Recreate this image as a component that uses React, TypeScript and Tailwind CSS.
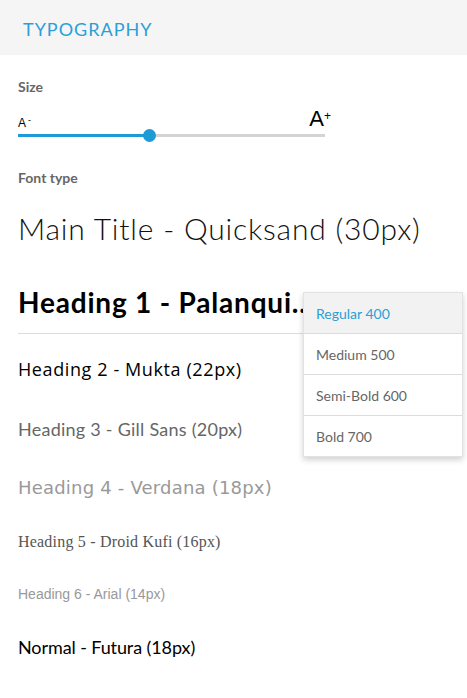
export default function App() {
  return (
    <div className="relative h-[698px] w-[467px] overflow-hidden bg-white font-['Lato',sans-serif]">
      <div className="flex h-[55px] items-center bg-[#f5f5f5] pl-[23px] pt-[2px]">
        <span className="text-[18px] leading-none tracking-[1px] text-[#2a9fd8]">TYPOGRAPHY</span>
      </div>
      <div className="px-[18px]">
        <div className="mt-[22px] text-[14px] font-bold leading-[20px] text-[#666]">Size</div>
        <div className="w-[307px] pt-[9px]">
          <div className="flex h-[24px] items-end justify-between font-['Liberation_Sans',sans-serif] text-black">
            <span className="pb-[1px] text-[12px] leading-none">
              A<sup className="ml-[2px] text-[9px]">-</sup>
            </span>
            <span className="mr-[-6px] text-[22px] leading-none">
              A<sup className="text-[12px]">+</sup>
            </span>
          </div>
          <div className="relative mt-[4px] h-[3px] bg-[#d4d4d4]">
            <div className="h-[3px] w-[131px] bg-[#1e9bd7]" />
            <div className="absolute left-[125px] top-[-5px] h-[13px] w-[13px] rounded-full bg-[#1e9bd7]" />
          </div>
        </div>
        <div className="mt-[31px] text-[14px] font-bold leading-[20px] text-[#666]">Font type</div>
        <div className="mt-[20px] text-[30px] font-light leading-[40px] tracking-[0.8px] text-[#111]">Main Title - Quicksand (30px)</div>
        <div className="relative mt-[36px]">
          <div className="w-[310px] overflow-hidden text-ellipsis whitespace-nowrap text-[28px] font-bold leading-[36px] tracking-[0.8px] text-black">
            Heading 1 - Palanquin (28px)
          </div>
          <div className="mt-[13px] h-px bg-[#dcdcdc]" />
        </div>
        <div className="mt-[22px] font-['Open_Sans',sans-serif] text-[18px] leading-[26px] tracking-[0.6px] text-black">Heading 2 - Mukta (22px)</div>
        <div className="mt-[34px] text-[18px] leading-[26px] tracking-[0.25px] text-[#666]">Heading 3 - Gill Sans (20px)</div>
        <div className="mt-[33px] font-['DejaVu_Sans',sans-serif] text-[18px] leading-[26px] tracking-[0.2px] text-[#999]">Heading 4 - Verdana (18px)</div>
        <div className="mt-[30px] font-['Liberation_Serif',serif] text-[16px] leading-[22px] tracking-[0.2px] text-[#555]">Heading 5 - Droid Kufi (16px)</div>
        <div className="mt-[31px] font-['Liberation_Sans',sans-serif] text-[14px] leading-[20px] text-[#999]">Heading 6 - Arial (14px)</div>
        <div className="mt-[30px] text-[18px] leading-[26px] tracking-[-0.1px] text-black">Normal - Futura (18px)</div>
      </div>
      <div className="absolute left-[303px] top-[292px] w-[160px] border border-[#e2e2e2] bg-white shadow-[0_3px_6px_rgba(0,0,0,0.18)]">
        <div className="flex h-[40px] items-center bg-[#f2f2f2] pl-[12px] text-[14px] text-[#2a9fd8]">Regular 400</div>
        <div className="flex h-[41px] items-center border-t border-[#dcdcdc] pl-[12px] text-[14px] text-[#666]">Medium 500</div>
        <div className="flex h-[41px] items-center border-t border-[#dcdcdc] pl-[12px] text-[14px] text-[#666]">Semi-Bold 600</div>
        <div className="flex h-[41px] items-center border-t border-[#dcdcdc] pl-[12px] text-[14px] text-[#666]">Bold 700</div>
      </div>
    </div>
  );
}
